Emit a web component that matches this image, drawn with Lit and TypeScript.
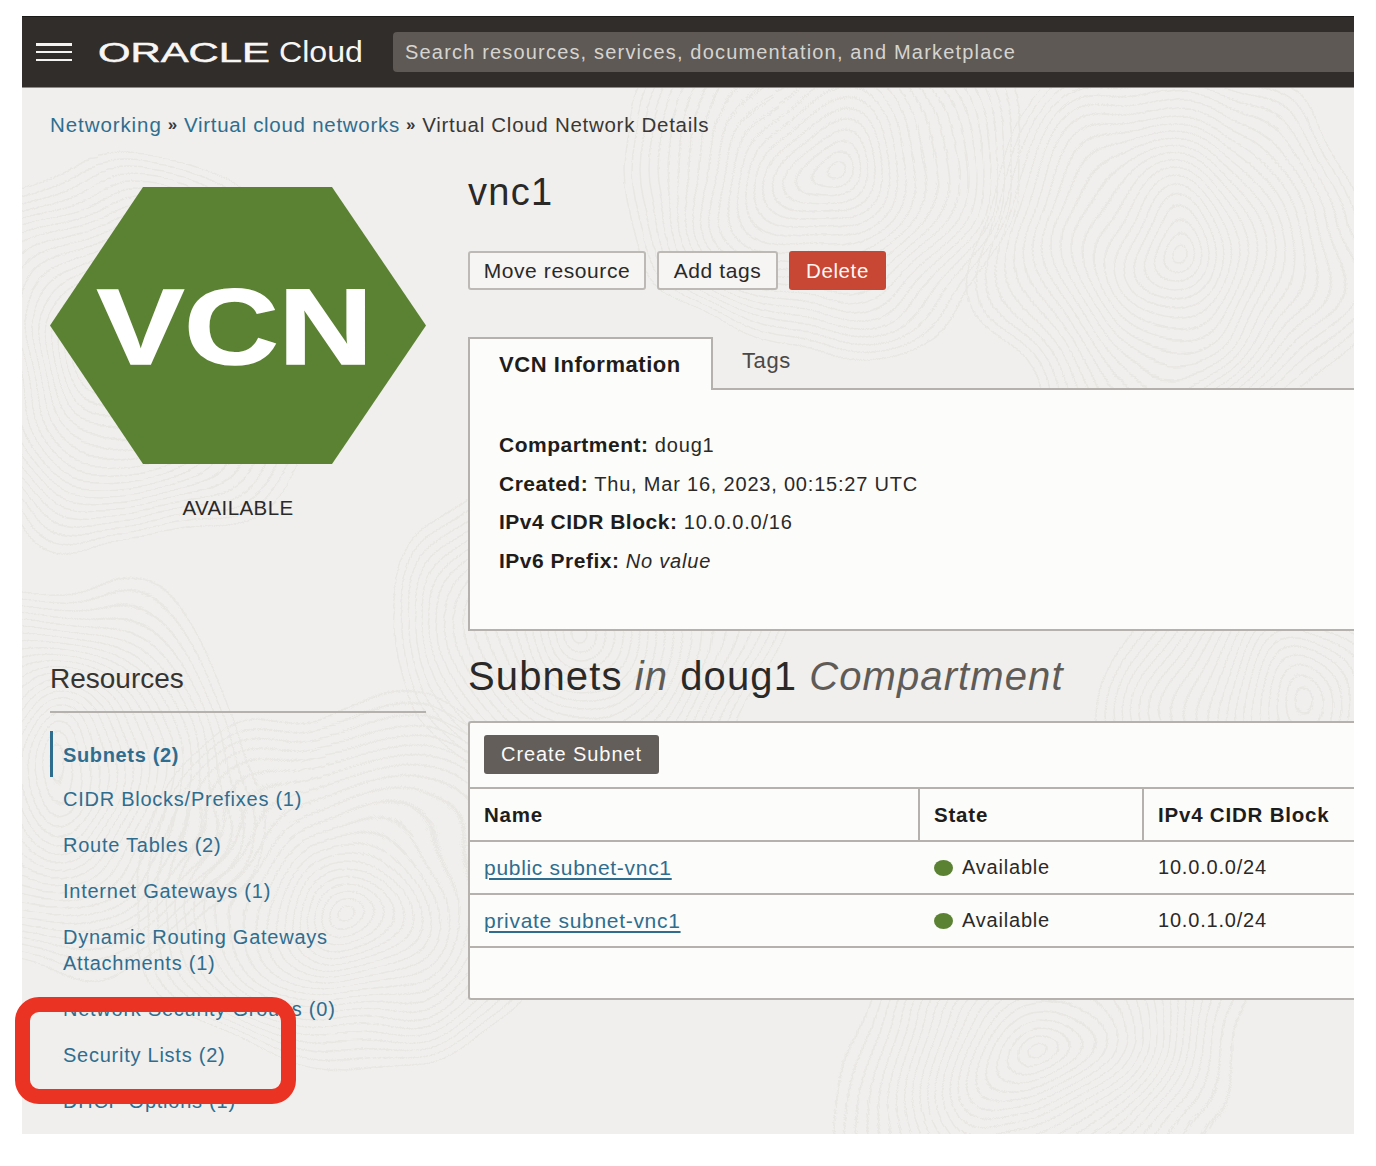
import { LitElement, html, svg, css } from "lit";
import { customElement } from "lit/decorators.js";

@customElement("app-root")
export class AppRoot extends LitElement {
  static styles = css`
    :host { display: block; position: relative; height: 1166px; background: #fff; overflow: hidden;
      font-family: "Liberation Sans", Arial, sans-serif; color: #2b2927; }
    .frame { position: absolute; inset: 16px 22px 32px 22px; overflow: hidden; background-color: #f0efed; }
    .texture { position: absolute; inset: 0; pointer-events: none; }
    .content { position: relative; height: 100%; }
    header { height: 72px; box-sizing: border-box; background: #312d2a; border-top: 1px solid #1c1a18; display: flex; align-items: center; padding: 0 0 0 14px; border-bottom: 1px solid #8f8c88; }
    .burger { width: 36px; height: 18px; display: flex; flex-direction: column; justify-content: space-between; margin-right: 26px; }
    .burger i { display: block; height: 2.5px; background: #f5f4f2; }
    .logo { display: block; flex: none; }
    .logo text { fill: #f7f6f4; font-family: "Liberation Sans", sans-serif; }
    .logo .mark { stroke: #f7f6f4; stroke-width: .5px; }
    .search { margin-left: 29px; flex: 1; height: 40px; background: #5e5954; border-radius: 4px 0 0 4px; color: #d6d4d0; font-size: 20px; letter-spacing: 1.18px; display: flex; align-items: center; padding-left: 12px; white-space: nowrap; }
    .crumbs { padding: 25px 0 0 28px; font-size: 20.5px; letter-spacing: .72px; line-height: 24px; white-space: nowrap; display: flex; color: #3a3734; }
    .crumbs a:first-child { letter-spacing: .92px; }
    a { color: #2f6d8f; text-decoration: none; }
    .sep { font-size: 17px; font-weight: 700; margin: 0 6px; color: #3a3734; }
    .main { display: grid; grid-template-columns: 376px 1fr; column-gap: 42px; padding: 0 0 0 28px; }
    .left { padding-top: 50px; }
    .hex { display: block; }
    .hex text { fill: #fff; stroke: #fff; stroke-width: 1.5px; font-family: "Liberation Sans", sans-serif; font-weight: 700; }
    .status { text-align: center; font-size: 20.5px; letter-spacing: .4px; line-height: 24px; margin-top: 32px; }
    .res { font-size: 28px; line-height: 32px; margin-top: 143px; padding-bottom: 16px; border-bottom: 2px solid #b5b2ae; color: #37342f; }
    nav { margin-top: 18px; font-size: 20px; letter-spacing: .75px; line-height: 26px; }
    nav a { display: block; padding: 0 0 20px 13px; }
    nav a.on { font-weight: 700; border-left: 3px solid #2f6d8f; padding: 11px 0 9px 10px; margin-bottom: 9px; letter-spacing: .65px; }
    .right { padding-top: 33px; min-width: 0; }
    h1 { margin: 0; font-weight: 400; font-size: 38px; letter-spacing: 1.3px; line-height: 44px; color: #2b2927; }
    .btns { display: flex; gap: 11px; margin-top: 37px; }
    .btn { box-sizing: border-box; height: 39px; display: flex; align-items: center; justify-content: center; border: 2px solid #bdbab6; background: #f6f5f3; border-radius: 3px; font-size: 21px; letter-spacing: .6px; }
    .b1 { width: 178px; } .b2 { width: 121px; }
    .danger { width: 97px; background: #c74634; border: none; color: #fdf6f3; font-size: 20.5px; }
    .tabs { display: flex; margin-top: 47px; height: 51px; }
    .tab { box-sizing: border-box; width: 245px; height: 53px; position: relative; z-index: 1; background: #fcfcfa; border: 2px solid #b5b2ae; border-bottom: none; padding: 14px 0 0 29px; font-weight: 700; font-size: 22px; letter-spacing: .55px; line-height: 24px; color: #1f1d1b; }
    .tab2 { padding: 12px 0 0 29px; font-size: 22px; letter-spacing: .6px; line-height: 24px; color: #4b4845; }
    .info { box-sizing: border-box; height: 243px; background: #fcfcfa; border: 2px solid #b5b2ae; border-right: none; padding: 43px 0 0 29px; font-size: 20px; letter-spacing: .8px; }
    .info div { height: 38.5px; line-height: 24px; }
    .info b { letter-spacing: .5px; color: #1f1d1b; font-size: 21px; }
    h2 { margin: 23px 0 0; font-weight: 400; font-size: 40px; letter-spacing: 1.1px; line-height: 44px; color: #2b2927; white-space: nowrap; }
    h2 em { color: #5f5c58; }
    .tbl { margin-top: 23px; box-sizing: border-box; height: 279px; background: #fcfcfa; border: 2px solid #b5b2ae; border-right: none; border-radius: 3px 0 0 3px; }
    .bar { height: 66px; box-sizing: border-box; padding: 12px 0 0 14px; border-bottom: 2px solid #b5b2ae; }
    .create { width: 175px; height: 39px; background: #645e5a; color: #fbfaf8; border-radius: 3px; display: flex; align-items: center; justify-content: center; font-size: 20px; letter-spacing: .92px; }
    .row { display: grid; grid-template-columns: 450px 224px 1fr; height: 53px; box-sizing: border-box; border-bottom: 2px solid #b5b2ae; font-size: 20px; letter-spacing: .8px; align-items: center; }
    .row > div { padding-left: 14px; }
    .head { font-weight: 700; font-size: 20.5px; letter-spacing: .8px; color: #1f1d1b; align-items: stretch; }
    .head > div { display: flex; align-items: center; }
    .head > div + div { border-left: 2px solid #b5b2ae; margin-left: -2px; }
    .row a { font-size: 21px; letter-spacing: .7px; text-decoration: underline; text-underline-offset: 3px; }
    .state { display: flex; align-items: center; gap: 9px; }
    .dot { width: 19px; height: 16px; border-radius: 50%; background: #5b8233; flex: none; }
    .note { position: absolute; left: 15px; top: 997px; width: 281px; height: 107px; box-sizing: border-box; border: 15px solid #ea3323; border-radius: 24px; pointer-events: none; }
  `;

  render() {
    const nav = ["CIDR Blocks/Prefixes (1)", "Route Tables (2)", "Internet Gateways (1)", "Dynamic Routing Gateways Attachments (1)", "Network Security Groups (0)", "Security Lists (2)", "DHCP Options (1)"];
    const centres = [[100,330],[330,880],[800,150],[1150,240],[1020,1040],[560,620],[40,760],[1280,700]];
    return html`
      <div class="frame">
        <svg class="texture" width="1332" height="1118" aria-hidden="true">
          <defs>
            <filter id="w" x="0" y="0" width="100%" height="100%">
              <feTurbulence type="fractalNoise" baseFrequency="0.005" numOctaves="2" seed="7" result="n"/>
              <feDisplacementMap in="SourceGraphic" in2="n" scale="110" xChannelSelector="R" yChannelSelector="G"/>
            </filter>
          </defs>
          <g filter="url(#w)" fill="none" stroke="#e9e7e4" stroke-width="1.5">
            ${centres.map(([x, y]) =>
              [...Array(22).keys()].map(i => svg`<circle cx=${x} cy=${y} r=${8 + i * 9}></circle>`))}
          </g>
        </svg>
        <div class="content">
          <header>
            <div class="burger"><i></i><i></i><i></i></div>
            <svg class="logo" width="266" height="34" viewBox="0 0 266 34" role="img" aria-label="Oracle Cloud">
              <text class="mark" x="0" y="27" font-size="27" textLength="172" lengthAdjust="spacingAndGlyphs">ORACLE</text>
              <text x="181" y="27" font-size="29" textLength="84" lengthAdjust="spacingAndGlyphs">Cloud</text>
            </svg>
            <div class="search">Search resources, services, documentation, and Marketplace</div>
          </header>
          <div class="crumbs"><a>Networking</a><span class="sep">»</span><a>Virtual cloud networks</a><span class="sep">»</span><span>Virtual Cloud Network Details</span></div>
          <div class="main">
            <div class="left">
              <svg class="hex" width="376" height="277" viewBox="0 0 376 277">
                <polygon points="93,0 282,0 376,138.5 282,277 93,277 0,138.5" fill="#5b8233"></polygon>
                <text x="47" y="177" font-size="108" textLength="276" lengthAdjust="spacingAndGlyphs">VCN</text>
              </svg>
              <div class="status">AVAILABLE</div>
              <div class="res">Resources</div>
              <nav>
                <a class="on">Subnets (2)</a>
                ${nav.map(n => html`<a style=${n.startsWith("Dynamic") ? "max-width:300px" : ""}>${n}</a>`)}
              </nav>
            </div>
            <div class="right">
              <h1>vnc1</h1>
              <div class="btns">
                <div class="btn b1">Move resource</div>
                <div class="btn b2">Add tags</div>
                <div class="btn danger">Delete</div>
              </div>
              <div class="tabs"><div class="tab">VCN Information</div><div class="tab2">Tags</div></div>
              <div class="info">
                <div><b>Compartment:</b> doug1</div>
                <div><b>Created:</b> Thu, Mar 16, 2023, 00:15:27 UTC</div>
                <div><b>IPv4 CIDR Block:</b> 10.0.0.0/16</div>
                <div><b>IPv6 Prefix:</b> <em>No value</em></div>
              </div>
              <h2>Subnets <em>in</em> doug1 <em>Compartment</em></h2>
              <div class="tbl">
                <div class="bar"><div class="create">Create Subnet</div></div>
                <div class="row head"><div>Name</div><div>State</div><div>IPv4 CIDR Block</div></div>
                <div class="row"><div><a>public subnet-vnc1</a></div><div class="state"><span class="dot"></span>Available</div><div>10.0.0.0/24</div></div>
                <div class="row"><div><a>private subnet-vnc1</a></div><div class="state"><span class="dot"></span>Available</div><div>10.0.1.0/24</div></div>
              </div>
            </div>
          </div>
        </div>
      </div>
      <div class="note"></div>
    `;
  }
}
